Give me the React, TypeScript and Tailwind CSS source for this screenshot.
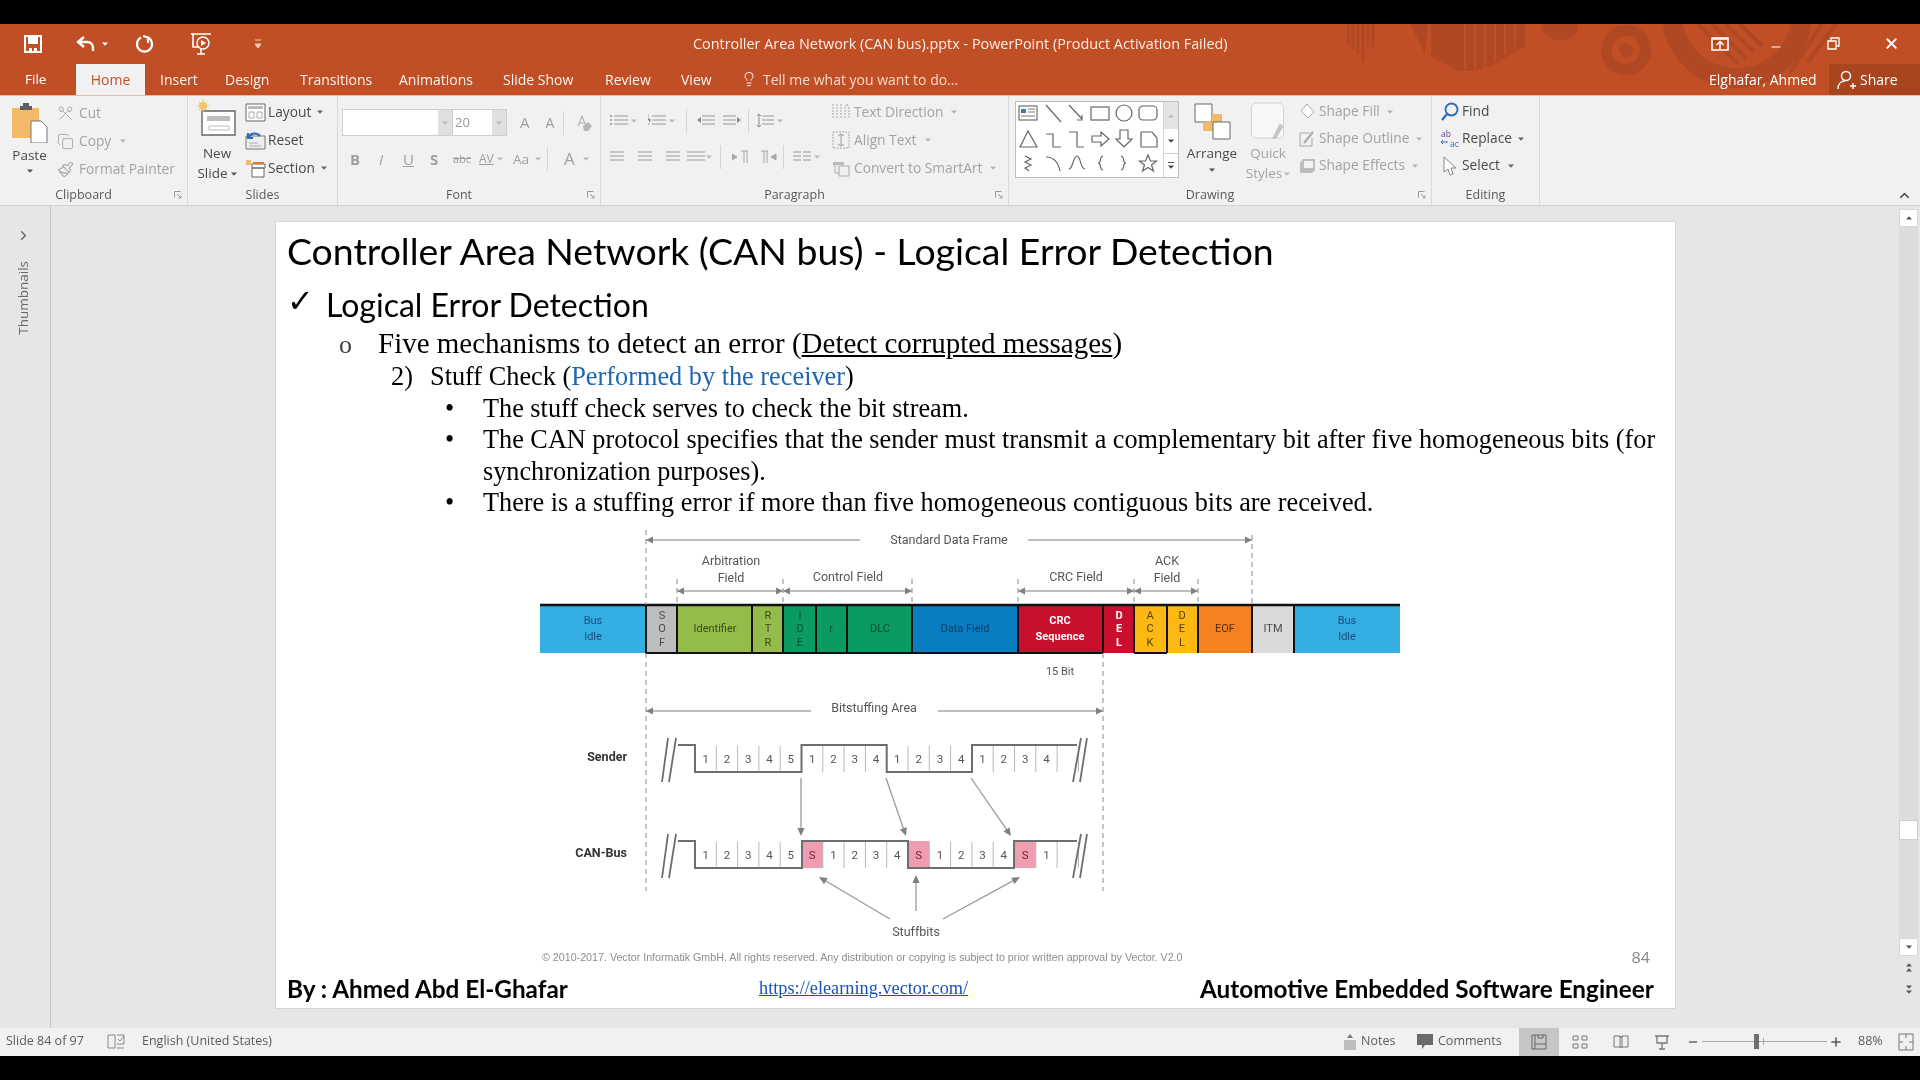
import type { ReactNode } from "react";
import { ChevronRight, ChevronUp, Lightbulb, Minus, Plus, Scissors, Copy, Paintbrush, X } from "lucide-react";

const ui = "font-['Open_Sans',sans-serif]";

function Caret({ className = "", color = "#8a8a8a" }: { className?: string; color?: string }) {
  return (
    <svg width="6" height="4" viewBox="0 0 6 4" className={"shrink-0 " + className}>
      <path d="M0 0.5h6L3 3.8z" fill={color} />
    </svg>
  );
}

function Launcher() {
  return (
    <svg width="8" height="8" viewBox="0 0 8 8" className="absolute right-[5px] bottom-[6px]">
      <path d="M0.5 0.5h6M0.5 0.5v6M3 3l4 4M7 4.5V7H4.5" fill="none" stroke="#9a9a9a" strokeWidth="1" />
    </svg>
  );
}

function Group({ w, label, launcher, children }: { w: number; label: string; launcher?: boolean; children: ReactNode }) {
  return (
    <div className="relative flex h-[109px] shrink-0 flex-col border-r border-[#d8d8d8]" style={{ width: w }}>
      <div className="flex min-h-0 flex-1 pt-[1px]">{children}</div>
      <div className={"h-[22px] text-center text-[12.5px] leading-[24px] text-[#5a5a5a] " + (launcher ? "pr-[20px]" : "")}>{label}</div>
      {launcher && <Launcher />}
    </div>
  );
}

function Row({ icon, text, caret, off, h = 28, gap = 4 }: { icon: ReactNode; text: string; caret?: boolean; off?: boolean; h?: number; gap?: number }) {
  return (
    <div className="flex items-center" style={{ height: h, gap }}>
      {icon}
      <span className={"whitespace-nowrap text-[13.75px] " + (off ? "text-[#a3a3a3]" : "text-[#4a4a4a]")}>{text}</span>
      {caret && <Caret className="ml-1" color={off ? "#b5b5b5" : "#666"} />}
    </div>
  );
}

function Lines({ x = 0, w = 14, n = 3 }: { x?: number; w?: number; n?: number }) {
  return (
    <>
      {Array.from({ length: n }, (_, i) => (
        <path key={i} d={`M${x} ${3 + i * 4}h${w}`} stroke="#a8a8a8" strokeWidth="1.2" />
      ))}
    </>
  );
}

function Small({ children, w = 18, ml = 0 }: { children: ReactNode; w?: number; ml?: number }) {
  return (
    <svg width={w} height="16" viewBox={`0 0 ${w} 16`} className="shrink-0" style={{ marginLeft: ml }}>
      {children}
    </svg>
  );
}

function Sep({ ml, mr = 0, h = 24 }: { ml: number; mr?: number; h?: number }) {
  return <div className="w-px shrink-0 bg-[#d4d4d4]" style={{ height: h, marginLeft: ml, marginRight: mr }} />;
}

function Header() {
  const tabs = [
    ["Insert", 160], ["Design", 225], ["Transitions", 300], ["Animations", 399],
    ["Slide Show", 503], ["Review", 605], ["View", 681],
  ] as const;
  return (
    <div className={"relative h-[71px] shrink-0 overflow-hidden bg-[#c04f26] text-white " + ui}>
      {/* title bar pattern */}
      <svg className="absolute left-[1340px] top-0" width="580" height="71" viewBox="0 0 580 71">
        <g fill="none" stroke="#b04823" strokeWidth="3">
          <path d="M8 0V20M13 0V25M18 0V30M23 0V38M28 0V22M33 0V24" />
        </g>
        <g fill="#b04823">
          <path d="M70 0h18l-3 30z" />
          <path d="M91 0H185V22l-30 18-20 7H118l-27-14z" />
          <path d="M201 0h37c0 12-8 16-18 16s-19-6-19-16z" />
          <path fillRule="evenodd" d="M286 1a25 25 0 1 0 .1 0zm0 11a14 14 0 1 1-.1 0zm0 7a7 7 0 1 0 .1 0z" />
        </g>
        <path d="M125 0V46M135 0V46M145 0V44M155 0V38M165 0V30M175 0V22" stroke="#c04f26" strokeWidth="2" />
        <circle cx="397" cy="-11" r="65" fill="none" stroke="#b04823" strokeWidth="20" />
        <g stroke="#b04823" strokeWidth="4">
          <path d="M358 0l40 40M372 0l34 34M386 0l28 28M400 0l22 22M468 0l-34 50M482 0l-32 48M496 0l-28 38" />
        </g>
      </svg>
      <div className="relative flex h-[39px] items-center">
        <div className="flex w-[693px] items-center">
          <svg width="18" height="18" viewBox="0 0 18 18" className="ml-[24px]">
            <path d="M1 1h16v16H1z" fill="none" stroke="#fff" strokeWidth="2" />
            <path d="M4 2h10v7H4z" fill="#fff" />
            <path d="M5 13h3v3H5zM10 13h3v3h-3z" fill="#fff" />
          </svg>
          <svg width="20" height="18" viewBox="0 0 20 18" className="ml-[34px]">
            <path d="M8 2L2 7l6 5M2 7h9c4 0 6 3 6 6v3" fill="none" stroke="#fff" strokeWidth="2.4" />
          </svg>
          <Caret className="ml-[6px]" color="#fff" />
          <svg width="20" height="20" viewBox="0 0 20 20" className="ml-[27px]">
            <path d="M6 3.5a7.5 7.5 0 1 0 7 0M13 9V2.5h-0M8 2l5 1.5V9" fill="none" stroke="#fff" strokeWidth="2.2" />
          </svg>
          <svg width="22" height="24" viewBox="0 0 22 24" className="ml-[35px]">
            <path d="M1 2h20M3 2v13h6M11 15v7M7 22h8" fill="none" stroke="#fff" strokeWidth="1.6" />
            <circle cx="13" cy="11" r="6" fill="#c04f26" stroke="#fff" strokeWidth="1.5" />
            <path d="M11 8l5 3-5 3z" fill="#fff" />
          </svg>
          <svg width="6" height="10" viewBox="0 0 6 10" className="ml-[43px]">
            <path d="M0 1h6M0 5h6l-3 4z" stroke="#f3c9b6" fill="#f3c9b6" />
          </svg>
        </div>
        <span className="w-[531px] whitespace-nowrap text-center text-[14.4px] text-[#fbeee8]">
          Controller Area Network (CAN bus).pptx - PowerPoint (Product Activation Failed)
        </span>
        <svg width="18" height="14" viewBox="0 0 18 14" className="ml-[487px]">
          <path d="M1 1h16v12H1z" fill="none" stroke="#fff" strokeWidth="1.6" />
          <path d="M9 12V5M5.5 8L9 4.5 12.5 8M2 2h14" fill="none" stroke="#fff" strokeWidth="1.5" />
        </svg>
        <Minus size={14} strokeWidth={2} className="ml-[40px] translate-y-[3px]" />
        <svg width="13" height="13" viewBox="0 0 13 13" className="ml-[44px]">
          <path d="M1 4h8v8H1zM4 4V1h8v8H9" fill="none" stroke="#fff" strokeWidth="1.3" />
        </svg>
        <X size={17} strokeWidth={2.6} className="ml-[43px]" />
      </div>
      <div className="relative flex h-[32px] text-[14px]">
        <span className="absolute left-[25px] top-[6px] text-[13.5px]">File</span>
        <div className="absolute left-[76px] top-[1px] flex h-[31px] w-[69px] items-center justify-center bg-[#f1f1f1] text-[#c04f26]">Home</div>
        {tabs.map(([t, x]) => (
          <span key={t} className="absolute top-[6px] whitespace-nowrap text-[#fdf3ee]" style={{ left: x }}>{t}</span>
        ))}
        <Lightbulb size={16} strokeWidth={1.4} className="absolute left-[741px] top-[8px]" />
        <span className="absolute left-[763px] top-[6px] whitespace-nowrap text-[#f7d9cb]">Tell me what you want to do...</span>
        <span className="absolute left-[1709px] top-[6px] whitespace-nowrap">Elghafar, Ahmed</span>
        <div className="absolute right-0 top-[1px] flex h-[31px] w-[91px] items-center bg-[#a8451f] pl-[8px]">
          <svg width="20" height="20" viewBox="0 0 20 20">
            <circle cx="9" cy="6" r="4.5" fill="none" stroke="#fff" strokeWidth="1.4" />
            <path d="M1 19c0-5 3-8 7-8M13 16h6M16 13v6" fill="none" stroke="#fff" strokeWidth="1.4" />
          </svg>
          <span className="ml-[3px]">Share</span>
        </div>
      </div>
    </div>
  );
}

function Gallery() {
  const s = { fill: "none", stroke: "#666", strokeWidth: 1.2 };
  const xs = [13, 38, 62, 85, 109, 133];
  return (
    <div className="ml-[6px] mt-[4px] flex h-[77px] w-[164px] border border-[#bdbdbd] bg-white">
      <svg width="147" height="75" viewBox="0 0 147 75" className="shrink-0">
        <g transform="translate(-1 -1)">
          <rect x={xs[0] - 9} y="5" width="18" height="14" fill="#fff" stroke="#555" />
          <path d="M6 8h5v4H6z" fill="#3b78c4" />
          <path d="M13 8h7M13 11h7M6 15h14" stroke="#777" />
          <path d="M31 4l15 17M54 4l13 14M67 14v5h-5" {...s} />
          <rect x={xs[3] - 9} y="6" width="18" height="13" {...s} />
          <circle cx={xs[4]} cy="12" r="8" {...s} />
          <rect x={xs[5] - 9} y="5" width="18" height="14" rx="4" {...s} />
          <path d="M13 30l-8 16h17zM31 33h7v13h8M54 31h8v15h7" {...s} />
          <path d="M77 35h9v-4l8 7-8 7v-4h-9zM105 29h8v9h4l-8 8-8-8h4zM126 46V31h11l5 6v9z" {...s} />
          <path d="M10 55l6 3-6 3 6 3-6 3 4 3M31 56c7 0 12 4 14 14M54 68c4 0 4-13 8-13s3 13 8 13M88 55c-4 0-1 7-5 7 4 0 1 7 5 7M106 55c4 0 1 7 5 7-4 0-1 7-5 7" {...s} />
          <path d="M133 54l2.5 6h6l-5 4 2 6-5.500-3.500-5.500 3.500 2-6-5-4h6z" {...s} />
        </g>
      </svg>
      <div className="flex w-[16px] flex-col border-l border-[#d0d0d0]">
        <div className="flex h-[27px] items-center justify-center bg-[#e4e4e4]"><Caret className="rotate-180" color="#bbb" /></div>
        <div className="flex h-[24px] items-center justify-center"><Caret color="#444" /></div>
        <div className="flex h-[24px] flex-col items-center justify-center gap-[2px] border-t border-[#d0d0d0]">
          <div className="h-px w-[6px] bg-[#555]" />
          <Caret color="#444" />
        </div>
      </div>
    </div>
  );
}

function Ribbon() {
  const off = "#a6a6a6";
  return (
    <div className={"flex h-[111px] shrink-0 border-b border-t border-[#d2d2d2] border-t-[#f3b79d] bg-[#f1f1f1] " + ui}>
      {/* Clipboard */}
      <Group w={188} label="Clipboard" launcher>
        <div className="flex w-[57px] flex-col items-center pl-[2px] pt-[6px]">
          <svg width="36" height="40" viewBox="0 0 36 40">
            <path d="M0 5h27v30H0z" fill="#f2b968" />
            <path d="M8 3h3V0h6v3h3v4H8z" fill="#5f5f5f" />
            <path d="M19 18h10l6 6v16H19z" fill="#fff" stroke="#777" />
          </svg>
          <span className="mt-[2px] text-[13.5px] leading-[20px] text-[#4a4a4a]">Paste</span>
          <Caret className="mt-[4px]" color="#555" />
        </div>
        <div className="pt-[2px]">
          <Row off icon={<Scissors size={17} color={off} strokeWidth={1.3} className="-scale-x-100 -rotate-90" />} text="Cut" gap={5} />
          <Row off caret icon={<Copy size={17} color={off} strokeWidth={1.3} />} text="Copy" gap={5} />
          <Row off icon={<Paintbrush size={17} color={off} strokeWidth={1.5} />} text="Format Painter" gap={5} />
        </div>
      </Group>
      {/* Slides */}
      <Group w={150} label="Slides">
        <div className="flex w-[57px] flex-col items-center pl-[1px] pt-[2px]">
          <svg width="40" height="38" viewBox="0 0 40 38">
            <path d="M5 12h33v24H5z" fill="#fff" stroke="#666" strokeWidth="1.4" />
            <path d="M10 17h23v5H10z" fill="#bdbdbd" />
            <path d="M12 27h20v4H12z" fill="none" stroke="#bdbdbd" />
            <circle cx="6" cy="7" r="4" fill="#f2c56b" />
            <path d="M6 0v14M0 7h12M2 3l8 8M10 3l-8 8" stroke="#f2c56b" />
          </svg>
          <span className="mt-[6px] text-center text-[13.5px] leading-[20px] text-[#4a4a4a]">
            New<br />Slide<Caret className="ml-[3px] inline" color="#555" />
          </span>
        </div>
        <div className="pt-[1px]">
          <Row caret gap={2} text="Layout" icon={
            <svg width="21" height="19" viewBox="0 0 21 19"><path d="M1 1h19v17H1z" fill="#fff" stroke="#666" /><path d="M3 3h15v3H3z" fill="#bbb" /><path d="M4 9h5v6H4zM12 9h5v6h-5z" fill="none" stroke="#aaa" /></svg>
          } />
          <Row gap={2} text="Reset" icon={
            <svg width="21" height="19" viewBox="0 0 21 19"><path d="M1 5h19v13H1z" fill="#eee" stroke="#777" /><path d="M3 7c2-5 9-6 12-2M3 2v5h5" fill="none" stroke="#2f6db5" strokeWidth="2.2" /><path d="M4 12h9M4 15h12" stroke="#aaa" /></svg>
          } />
          <Row caret gap={2} text="Section" icon={
            <svg width="21" height="19" viewBox="0 0 21 19"><path d="M7 5h13v4H7zM7 9h12v9H7z" fill="#fff" stroke="#666" /><path d="M1 1h5v5H1z" fill="#f2b968" /><path d="M8 4h11" stroke="#e8762c" strokeWidth="2" /></svg>
          } />
        </div>
      </Group>
      {/* Font */}
      <Group w={263} label="Font" launcher>
        <div className="flex flex-col pl-[4px]">
          <div className="mt-[12px] flex h-[27px] items-center">
            <div className="flex h-full w-[111px] justify-end border border-[#cfcfcf] bg-white">
              <div className="flex w-[14px] items-center justify-center bg-[#e0e0e0]"><Caret color="#bbb" /></div>
            </div>
            <div className="flex h-full w-[54px] items-center justify-between border border-l-0 border-[#cfcfcf] bg-white pl-[2px] text-[13px] text-[#9a9a9a]">
              20
              <div className="flex h-full w-[14px] items-center justify-center bg-[#e0e0e0]"><Caret color="#bbb" /></div>
            </div>
            <span className="ml-[13px] text-[15px] text-[#a0a0a0]">A</span>
            <span className="ml-[16px] text-[14px] text-[#a0a0a0]">A</span>
            <Sep ml={9} />
            <svg width="18" height="18" viewBox="0 0 18 18" className="ml-[11px]">
              <path d="M3 12L7 2l3 8M4 9h5" fill="none" stroke="#a8a8a8" />
              <path d="M8 12l5-4 4 4-4 5H9z" fill="#b5b5b5" />
            </svg>
          </div>
          <div className="mt-[9px] flex h-[28px] items-center text-[#a0a0a0]">
            <span className="ml-[8px] w-[29px] text-[15px] font-bold">B</span>
            <span className="w-[24px] text-[15px] italic">I</span>
            <span className="w-[27px] text-[15px] underline">U</span>
            <span className="w-[23px] text-[15px] font-bold">S</span>
            <span className="w-[26px] text-[11px] line-through">abc</span>
            <span className="w-[16px] text-[12px] underline">AV</span>
            <Caret className="ml-[2px] mr-[10px]" color="#bbb" />
            <span className="w-[22px] text-[13.5px]">Aa</span>
            <Caret className="mr-[5px]" color="#bbb" />
            <Sep ml={1} mr={16} />
            <span className="text-[17px]">A</span>
            <Caret className="ml-[8px]" color="#bbb" />
          </div>
        </div>
      </Group>
      {/* Paragraph */}
      <Group w={408} label="Paragraph" launcher>
        <div className="flex w-[231px] flex-col pl-[9px]">
          <div className="mt-[12px] flex h-[24px] items-center">
            <Small><Lines x={4} /><path d="M0 3h2M0 7h2M0 11h2" stroke="#a8a8a8" strokeWidth="2" /></Small>
            <Caret className="ml-[3px]" color="#bbb" />
            <Small ml={11}><Lines x={4} /><path d="M0 1v4M0 6h2v3M0 11h2" stroke="#a8a8a8" /></Small>
            <Caret className="ml-[3px]" color="#bbb" />
            <Sep ml={11} mr={10} />
            <Small><Lines x={5} w={13} n={3} /><path d="M0 7l4-3v6z" fill="#8a8a8a" /></Small>
            <Small ml={8}><Lines x={0} w={13} n={3} /><path d="M18 7l-4-3v6z" fill="#8a8a8a" /></Small>
            <Sep ml={7} mr={7} />
            <Small><Lines x={6} w={12} n={3} /><path d="M3 1v13M1 3l2-2 2 2M1 12l2 2 2-2" fill="none" stroke="#8a8a8a" /></Small>
            <Caret className="ml-[3px]" color="#bbb" />
          </div>
          <div className="mt-[10px] flex h-[28px] items-center">
            <Small><Lines x={0} w={14} n={3} /></Small>
            <Small ml={8}><Lines x={2} w={14} n={3} /></Small>
            <Small ml={8}><Lines x={4} w={14} n={3} /></Small>
            <Small ml={7}><Lines x={0} w={18} n={3} /></Small>
            <Caret className="ml-[1px]" color="#bbb" />
            <Sep ml={8} mr={11} />
            <Small><path d="M9 2h7M12 2v12M15 2v12M0 5l5 3-5 3z" fill="#a8a8a8" stroke="#a8a8a8" /></Small>
            <Small ml={9}><path d="M2 2h7M5 2v12M8 2v12M17 5l-5 3 5 3z" fill="#a8a8a8" stroke="#a8a8a8" /></Small>
            <Sep ml={6} mr={9} />
            <Small w={20}><Lines x={0} w={8} n={3} /><Lines x={10} w={8} n={3} /></Small>
            <Caret className="ml-[1px]" color="#bbb" />
          </div>
        </div>
        <div className="pt-[1px]">
          <Row off caret text="Text Direction" icon={
            <svg width="18" height="20" viewBox="0 0 18 20"><path d="M1 2v15M5 2v15M9 2v15M13 16V6l2-4 2 4v10" fill="none" stroke="#a8a8a8" strokeDasharray="2 1" /></svg>
          } />
          <Row off caret text="Align Text" icon={
            <svg width="18" height="20" viewBox="0 0 18 20"><path d="M1 2h16v16H1z" fill="none" stroke="#a8a8a8" strokeDasharray="2 1" /><path d="M9 4v12M6 6l3-2 3 2M6 14l3 2 3-2" fill="none" stroke="#999" /></svg>
          } />
          <Row off caret text="Convert to SmartArt" icon={
            <svg width="18" height="20" viewBox="0 0 18 20"><path d="M1 4h11v3H1z" fill="#bbb" /><path d="M7 8h10v10H7z" fill="none" stroke="#a8a8a8" /><path d="M3 7v8h4" stroke="#a8a8a8" fill="none" /></svg>
          } />
        </div>
      </Group>
      {/* Drawing */}
      <Group w={423} label="Drawing" launcher>
        <Gallery />
        <div className="ml-[3px] flex w-[60px] flex-col items-center pt-[6px]">
          <svg width="38" height="37" viewBox="0 0 38 37">
            <path d="M2 1h17v18H2z" fill="#fff" stroke="#666" />
            <path d="M19 11h10v8H19zM10 19h10v9H10z" fill="#f2b968" />
            <path d="M20 19h17v17H20z" fill="#fff" stroke="#666" />
          </svg>
          <span className="mt-[3px] text-[13.5px] leading-[20px] text-[#4a4a4a]">Arrange</span>
          <Caret className="mt-[5px]" color="#555" />
        </div>
        <div className="ml-[1px] flex w-[50px] flex-col items-center pt-[5px]">
          <svg width="36" height="40" viewBox="0 0 36 40">
            <rect x="1" y="1" width="33" height="36" rx="5" fill="#f8f8f8" stroke="#d0d0d0" />
            <path d="M22 38l8-16 4 3-8 13z" fill="#c5c5c5" />
          </svg>
          <span className="mt-[2px] text-center text-[13.5px] leading-[20px] text-[#a3a3a3]">
            Quick<br />Styles<Caret className="ml-[2px] inline" color="#bbb" />
          </span>
        </div>
        <div className="ml-[6px] pt-[1px]">
          <Row off caret h={27} gap={3} text="Shape Fill" icon={
            <svg width="17" height="17" viewBox="0 0 17 17"><path d="M8 1l7 8-6 6-7-7z" fill="#fff" stroke="#aaa" /></svg>
          } />
          <Row off caret h={27} gap={3} text="Shape Outline" icon={
            <svg width="17" height="17" viewBox="0 0 17 17"><path d="M1 3h10M1 3v13h12V8" fill="none" stroke="#aaa" /><path d="M5 13l9-11" stroke="#aaa" strokeWidth="2" /></svg>
          } />
          <Row off caret h={27} gap={3} text="Shape Effects" icon={
            <svg width="17" height="17" viewBox="0 0 17 17"><path d="M4 2h12v11l-3 3H1V6z" fill="#bdbdbd" /><path d="M5 4h9v7H5z" fill="#f2f2f2" /></svg>
          } />
        </div>
      </Group>
      {/* Editing */}
      <Group w={108} label="Editing">
        <div className="pl-[8px] pt-[1px]">
          <Row h={27} gap={3} text="Find" icon={
            <svg width="19" height="20" viewBox="0 0 19 20"><circle cx="11.500" cy="7.500" r="6" fill="none" stroke="#2f6db5" strokeWidth="1.8" /><path d="M7 12l-5 6" stroke="#2f6db5" strokeWidth="2.200" /></svg>
          } />
          <Row h={27} caret gap={2} text="Replace" icon={
            <svg width="20" height="24" viewBox="0 0 20 24" className="font-['Open_Sans',sans-serif]">
              <text x="1" y="10" className="text-[8.5px]" fill="#6a3fa0">ab</text>
              <text x="10" y="20" className="text-[8.5px]" fill="#2f6db5">ac</text>
              <path d="M1 15h7M3 13l-2 2 2 2" fill="none" stroke="#2f6db5" />
            </svg>
          } />
          <Row h={27} caret gap={4} text="Select" icon={
            <svg width="18" height="20" viewBox="0 0 18 20"><path d="M4 1v15l4-3 2 6 3-1-2-6h5z" fill="#fff" stroke="#888" /></svg>
          } />
        </div>
      </Group>
      <div className="flex flex-1 items-end justify-end pb-[2px] pr-[8px]">
        <ChevronUp size={15} strokeWidth={2.4} color="#555" />
      </div>
    </div>
  );
}

const seg = "font-['Roboto',sans-serif]";

const bars = [
  { x: 540, e: 646, c: "#34ade0" }, { x: 646, e: 677, c: "#bcbec0" }, { x: 677, e: 752, c: "#95bb4a" },
  { x: 752, e: 783, c: "#95bb4a" }, { x: 783, e: 816, c: "#0b9a62" }, { x: 816, e: 847, c: "#0b9a62" },
  { x: 847, e: 912, c: "#0b9a62" }, { x: 912, e: 1018, c: "#0a7cc1" }, { x: 1018, e: 1103, c: "#c8102e" },
  { x: 1103, e: 1134, c: "#c8102e" }, { x: 1134, e: 1167, c: "#fdb813" }, { x: 1167, e: 1198, c: "#fdb813" },
  { x: 1198, e: 1252, c: "#f58220" }, { x: 1252, e: 1294, c: "#d9dadc" }, { x: 1294, e: 1400, c: "#34ade0" },
];

const barText = [
  { x: 593, l: ["Bus", "Idle"], f: "#174f80" }, { x: 662, l: ["S", "O", "F"], f: "#4b4b4b" },
  { x: 715, l: ["Identifier"], f: "#3c4a1c" }, { x: 768, l: ["R", "T", "R"], f: "#3c4a1c" },
  { x: 800, l: ["I", "D", "E"], f: "#0a4f35" }, { x: 831, l: ["r"], f: "#0a4f35" },
  { x: 880, l: ["DLC"], f: "#0a4f35" }, { x: 965, l: ["Data Field"], f: "#0d3f66" },
  { x: 1060, l: ["CRC", "Sequence"], f: "#fff", b: true }, { x: 1119, l: ["D", "E", "L"], f: "#fff", b: true },
  { x: 1150, l: ["A", "C", "K"], f: "#5a4000" }, { x: 1182, l: ["D", "E", "L"], f: "#5a4000" },
  { x: 1225, l: ["EOF"], f: "#5a2d00" }, { x: 1273, l: ["ITM"], f: "#4b4b4b" }, { x: 1347, l: ["Bus", "Idle"], f: "#174f80" },
];

function Arrow({ x1, y1, x2, y2 }: { x1: number; y1: number; x2: number; y2: number }) {
  const a = Math.atan2(y2 - y1, x2 - x1);
  const p = (d: number, s: number) => `${x2 - 8 * Math.cos(a) + s * d * Math.sin(a)},${y2 - 8 * Math.sin(a) - s * d * Math.cos(a)}`;
  return (
    <g>
      <line x1={x1} y1={y1} x2={x2 - 4 * Math.cos(a)} y2={y2 - 4 * Math.sin(a)} stroke="#9a9a9a" strokeWidth="1.3" />
      <polygon points={`${x2},${y2} ${p(3.6, 1)} ${p(3.6, -1)}`} fill="#808080" />
    </g>
  );
}

function Span({ a, b, y }: { a: number; b: number; y: number }) {
  return (
    <g>
      <line x1={a} x2={b} y1={y} y2={y} stroke="#a8a8a8" strokeWidth="1.300" />
      <polygon points={`${a},${y} ${a + 7},${y - 3.5} ${a + 7},${y + 3.5}`} fill="#808080" />
      <polygon points={`${b},${y} ${b - 7},${y - 3.5} ${b - 7},${y + 3.5}`} fill="#808080" />
    </g>
  );
}

function Wave({ y, d, digits, labels, label }: { y: number; d: string; digits: number; labels: string[]; label: string }) {
  const bit = 21.3;
  const low = y + 27;
  return (
    <g>
      {labels.map((t, i) => {
        const x = 695 + i * bit;
        return (
          <g key={i}>
            {t === "S" && <rect x={x} y={y} width={bit} height={27} fill="#f09db2" />}
            <line x1={x + bit} x2={x + bit} y1={y + 1} y2={low} stroke="#b8b8b8" strokeWidth="1" />
            <text x={x + bit / 2} y={digits} textAnchor="middle" className="text-[11.5px]" fill={t === "S" ? "#7b2236" : "#555"}>{t}</text>
          </g>
        );
      })}
      <path d={d} fill="none" stroke="#6d6e70" strokeWidth="2" />
      <path d={`M668 ${y - 7}L662 ${y + 37}M676 ${y - 7}L669 ${y + 37}M1081 ${y - 7}L1073 ${y + 37}M1087 ${y - 7}L1080 ${y + 37}`} stroke="#6d6e70" strokeWidth="1.8" />
      <text x="627" y={y + 16} textAnchor="end" className="text-[12.5px] font-bold" fill="#333">{label}</text>
    </g>
  );
}

function Diagram() {
  const dash = { stroke: "#8a8a8a", strokeWidth: 1, strokeDasharray: "5 4" };
  const ticks = [677, 783, 912, 1018, 1134, 1198];
  const black = [646, 677, 752, 783, 816, 847, 912, 1018, 1103, 1134, 1167, 1198, 1252, 1294];
  return (
    <svg width="870" height="424" viewBox="535 524 870 424" className={"ml-[248px] block shrink-0 " + seg}>
      {bars.map((b) => <rect key={b.x} x={b.x} y={605} width={b.e - b.x} height={48} fill={b.c} />)}
      {black.map((x) => <line key={x} x1={x} x2={x} y1={605} y2={653} stroke="#111" strokeWidth="2" />)}
      <line x1={540} x2={1400} y1={605} y2={605} stroke="#111" strokeWidth="2.400" />
      <line x1={645} x2={1103} y1={653} y2={653} stroke="#111" strokeWidth="2" />
      <line x1={1134} x2={1167} y1={653} y2={653} stroke="#111" strokeWidth="2" />
      {barText.map((t) => {
        const step = t.l.length === 3 ? 13.5 : 16;
        const start = 629 - ((t.l.length - 1) * step) / 2 + 3;
        return t.l.map((s, i) => (
          <text key={t.x + s + i} x={t.x} y={start + i * step} textAnchor="middle" fill={t.f} className={"text-[11px] " + (t.b ? "font-bold" : "")}>{s}</text>
        ));
      })}
      <line x1={646} x2={646} y1={530} y2={605} {...dash} />
      <line x1={646} x2={646} y1={653} y2={891} {...dash} />
      <line x1={1252} x2={1252} y1={535} y2={605} {...dash} />
      <line x1={1103} x2={1103} y1={653} y2={891} {...dash} />
      {ticks.map((x) => <line key={x} x1={x} x2={x} y1={579} y2={605} {...dash} />)}

      <Span a={646} b={869} y={540} />
      <rect x={860} y={535} width={12} height={10} fill="#fff" />
      <Span a={1020} b={1252} y={540} />
      <rect x={1016} y={535} width={12} height={10} fill="#fff" />
      <text x={949} y={544} textAnchor="middle" className="text-[12.5px]" fill="#555">Standard Data Frame</text>

      <Span a={677} b={783} y={591} />
      <Span a={783} b={912} y={591} />
      <Span a={1018} b={1134} y={591} />
      <Span a={1134} b={1198} y={591} />
      <text x={731} y={565} textAnchor="middle" className="text-[12.5px]" fill="#555">Arbitration</text>
      <text x={731} y={582} textAnchor="middle" className="text-[12.5px]" fill="#555">Field</text>
      <text x={848} y={581} textAnchor="middle" className="text-[12.5px]" fill="#555">Control Field</text>
      <text x={1076} y={581} textAnchor="middle" className="text-[12.5px]" fill="#555">CRC Field</text>
      <text x={1167} y={565} textAnchor="middle" className="text-[12.5px]" fill="#555">ACK</text>
      <text x={1167} y={582} textAnchor="middle" className="text-[12.5px]" fill="#555">Field</text>
      <text x={1060} y={675} textAnchor="middle" className="text-[11px]" fill="#555">15 Bit</text>

      <Span a={646} b={1103} y={711} />
      <rect x={811} y={704} width={127} height={14} fill="#fff" />
      <text x={874} y={712} textAnchor="middle" className="text-[12.5px]" fill="#555">Bitstuffing Area</text>

      <Wave y={745} digits={763} label="Sender" labels={["1","2","3","4","5","1","2","3","4","1","2","3","4","1","2","3","4",""]}
        d="M678 745H695V772H801.500V745H886.700V772H972V745H1077" />
      <Wave y={841} digits={859} label="CAN-Bus" labels={["1","2","3","4","5","S","1","2","3","4","S","1","2","3","4","S","1",""]}
        d="M678 841H695V868H802V841H908V868H1014V841H1077" />

      <Arrow x1={801} y1={778} x2={801} y2={836} />
      <Arrow x1={886} y1={778} x2={906} y2={836} />
      <Arrow x1={971} y1={778} x2={1011} y2={836} />
      <Arrow x1={890} y1={919} x2={819} y2={877} />
      <Arrow x1={916} y1={911} x2={916} y2={875} />
      <Arrow x1={943} y1={919} x2={1020} y2={877} />
      <text x={916} y={936} textAnchor="middle" className="text-[12.5px]" fill="#555">Stuffbits</text>
    </svg>
  );
}

function Slide() {
  const serif = "font-['Liberation_Serif',serif] text-black";
  const bullets = [
    "The stuff check serves to check the bit stream.",
    "The CAN protocol specifies that the sender must transmit a complementary bit after five homogeneous bits (for synchronization purposes).",
    "There is a stuffing error if more than five homogeneous contiguous bits are received.",
  ];
  return (
    <div className="flex h-[788px] w-[1401px] shrink-0 flex-col border border-[#d6d6d6] bg-white pl-[11px] font-['Lato',sans-serif] text-black">
      <h1 className="mt-[5px] whitespace-nowrap text-[37.400px] font-normal leading-[48px]">Controller Area Network (CAN bus) - Logical Error Detection</h1>
      <div className="mt-[11px] flex h-[38px] items-center">
        <span className="w-[39px] pb-[8px] font-['DejaVu_Sans',sans-serif] text-[32px] leading-[38px]">✓</span>
        <span className="text-[32px]">Logical Error Detection</span>
      </div>
      <div className={"mt-[4px] flex h-[32px] items-center text-[29px] " + serif}>
        <span className="ml-[52px] w-[39px] text-[26px] text-[#444]">o</span>
        <span className="whitespace-nowrap">Five mechanisms to detect an error (<span className="underline">Detect corrupted messages</span>)</span>
      </div>
      <div className={"mt-[1px] flex h-[32px] items-center text-[26.300px] " + serif}>
        <span className="ml-[104px] w-[39px]">2)</span>
        <span className="whitespace-nowrap">Stuff Check (<span className="text-[#1f66b0]">Performed by the receiver</span>)</span>
      </div>
      <ul className={"w-[1385px] text-[26.250px] leading-[31.300px] " + serif}>
        {bullets.map((b) => (
          <li key={b} className="flex">
            <span className="ml-[158px] w-[38px] shrink-0">•</span>
            <span>{b}</span>
          </li>
        ))}
      </ul>
      <div className="mt-[6px]"><Diagram /></div>
      <div className="flex h-[16px] items-center pt-[2px]">
        <span className="ml-[255px] whitespace-nowrap font-['Liberation_Sans',sans-serif] text-[10.700px] text-[#8d8d8d]">
          © 2010-2017. Vector Informatik GmbH. All rights reserved. Any distribution or copying is subject to prior written approval by Vector. V2.0
        </span>
        <span className="ml-[449px] text-[16px] text-[#8b8b8b]">84</span>
      </div>
      <div className="mt-[10px] flex h-[30px] items-center whitespace-nowrap text-[24.300px] font-bold">
        <span className="w-[472px]">By : Ahmed Abd El-Ghafar</span>
        <a className="w-[441px] font-['Liberation_Serif',serif] text-[18.300px] font-normal text-[#1a4fc0] underline">https://elearning.vector.com/</a>
        <span>Automotive Embedded Software Engineer</span>
      </div>
    </div>
  );
}

function Scrollbar() {
  const btn = "flex h-[18px] w-[19px] items-center justify-center border border-[#d8d8d8] bg-white";
  return (
    <div className="flex w-[21px] shrink-0 flex-col items-start pt-[3px]">
      <div className={btn}><Caret className="rotate-180" color="#555" /></div>
      <div className="flex h-[711px] w-[19px] flex-col bg-[#dcdcdc] pt-[593px]">
        <div className="h-[20px] w-[19px] border border-[#cfcfcf] bg-white" />
      </div>
      <div className={btn}><Caret color="#555" /></div>
      <div className="mt-[7px] flex w-[19px] flex-col items-center gap-[1px]">
        <Caret className="rotate-180" color="#555" />
        <Caret className="rotate-180" color="#555" />
      </div>
      <div className="mt-[13px] flex w-[19px] flex-col items-center gap-[1px]">
        <Caret color="#555" />
        <Caret color="#555" />
      </div>
    </div>
  );
}

function StatusBar() {
  return (
    <div className={"flex h-[28px] shrink-0 items-center bg-[#f1f1f1] pb-[1px] text-[12.500px] text-[#5c5c5c] " + ui}>
      <span className="ml-[6px] w-[101px]">Slide 84 of 97</span>
      <svg width="18" height="16" viewBox="0 0 18 16">
        <path d="M1 1h7v13H1z" fill="none" stroke="#888" />
        <path d="M10 1h7v9h-7M10 14h7M11 5l2 2 4-5" fill="none" stroke="#888" />
      </svg>
      <span className="ml-[17px] w-[1201px] whitespace-nowrap">English (United States)</span>
      <svg width="14" height="18" viewBox="0 0 14 18" className="mr-[4px]">
        <path d="M1 7h12v10H1z" fill="#bdbdbd" /><path d="M4 5l3-4 3 4z" fill="#777" />
      </svg>
      <span className="w-[56px]">Notes</span>
      <svg width="16" height="16" viewBox="0 0 16 16" className="mr-[5px]">
        <path d="M0 0h16v11H8l-3 4v-4H0z" fill="#6a6a6a" />
      </svg>
      <span className="w-[81px]">Comments</span>
      <div className="mb-[-1px] flex h-[28px] w-[40px] items-center justify-center bg-[#c6c6c6]">
        <svg width="16" height="16" viewBox="0 0 16 16"><path d="M1 1h14v14H1zM4 1v14M4 10h11M7 1v3h5V1" fill="none" stroke="#666" /></svg>
      </div>
      <svg width="16" height="14" viewBox="0 0 16 14" className="ml-[13px]"><path d="M1 1h5v4H1zM10 1h5v4h-5zM1 9h5v4H1zM10 9h5v4h-5z" fill="none" stroke="#777" /></svg>
      <svg width="16" height="14" viewBox="0 0 16 14" className="ml-[25px]"><path d="M1 1h6v11H1zM9 1h6v11H9zM7 1l1 2 1-2M7 12l1 1 1-1" fill="none" stroke="#777" /></svg>
      <svg width="16" height="16" viewBox="0 0 16 16" className="ml-[25px]"><path d="M1 2h14M3 2v7h10V2M8 9v6M5 15h6" fill="none" stroke="#777" strokeWidth="1.300" /></svg>
      <Minus size={12} strokeWidth={3} color="#666" className="ml-[17px]" />
      <div className="relative ml-[3px] h-px w-[125px] bg-[#a8a8a8]">
        <div className="absolute left-[52px] top-[-7px] h-[15px] w-[5px] bg-[#707070]" />
        <div className="absolute left-[61px] top-[-3px] h-[7px] w-px bg-[#a8a8a8]" />
      </div>
      <Plus size={14} strokeWidth={2.600} color="#555" className="ml-[2px]" />
      <span className="ml-[15px] w-[40px]">88%</span>
      <svg width="16" height="18" viewBox="0 0 16 18"><path d="M1 1h14v16H1zM8 1v4M8 13v4M1 9h4M11 9h4" fill="none" stroke="#777" /></svg>
    </div>
  );
}

export default function App() {
  return (
    <div className="flex h-[1080px] w-[1920px] flex-col overflow-hidden bg-black blur-[0.5px]">
      <div className="h-[24px] shrink-0" />
      <Header />
      <Ribbon />
      <div className="flex min-h-0 flex-1 bg-[#e6e6e6]">
        <div className={"flex w-[51px] shrink-0 flex-col items-center border-r border-[#c8c8c8] pr-[3px] pt-[22px] text-[#6a6a6a] " + ui}>
          <ChevronRight size={15} strokeWidth={2.4} />
          <span className="mt-[18px] rotate-180 text-[13.500px] [writing-mode:vertical-rl]">Thumbnails</span>
        </div>
        <div className="flex-1 pl-[224px] pt-[15px]"><Slide /></div>
        <Scrollbar />
      </div>
      <StatusBar />
      <div className="h-[24px] shrink-0" />
    </div>
  );
}
